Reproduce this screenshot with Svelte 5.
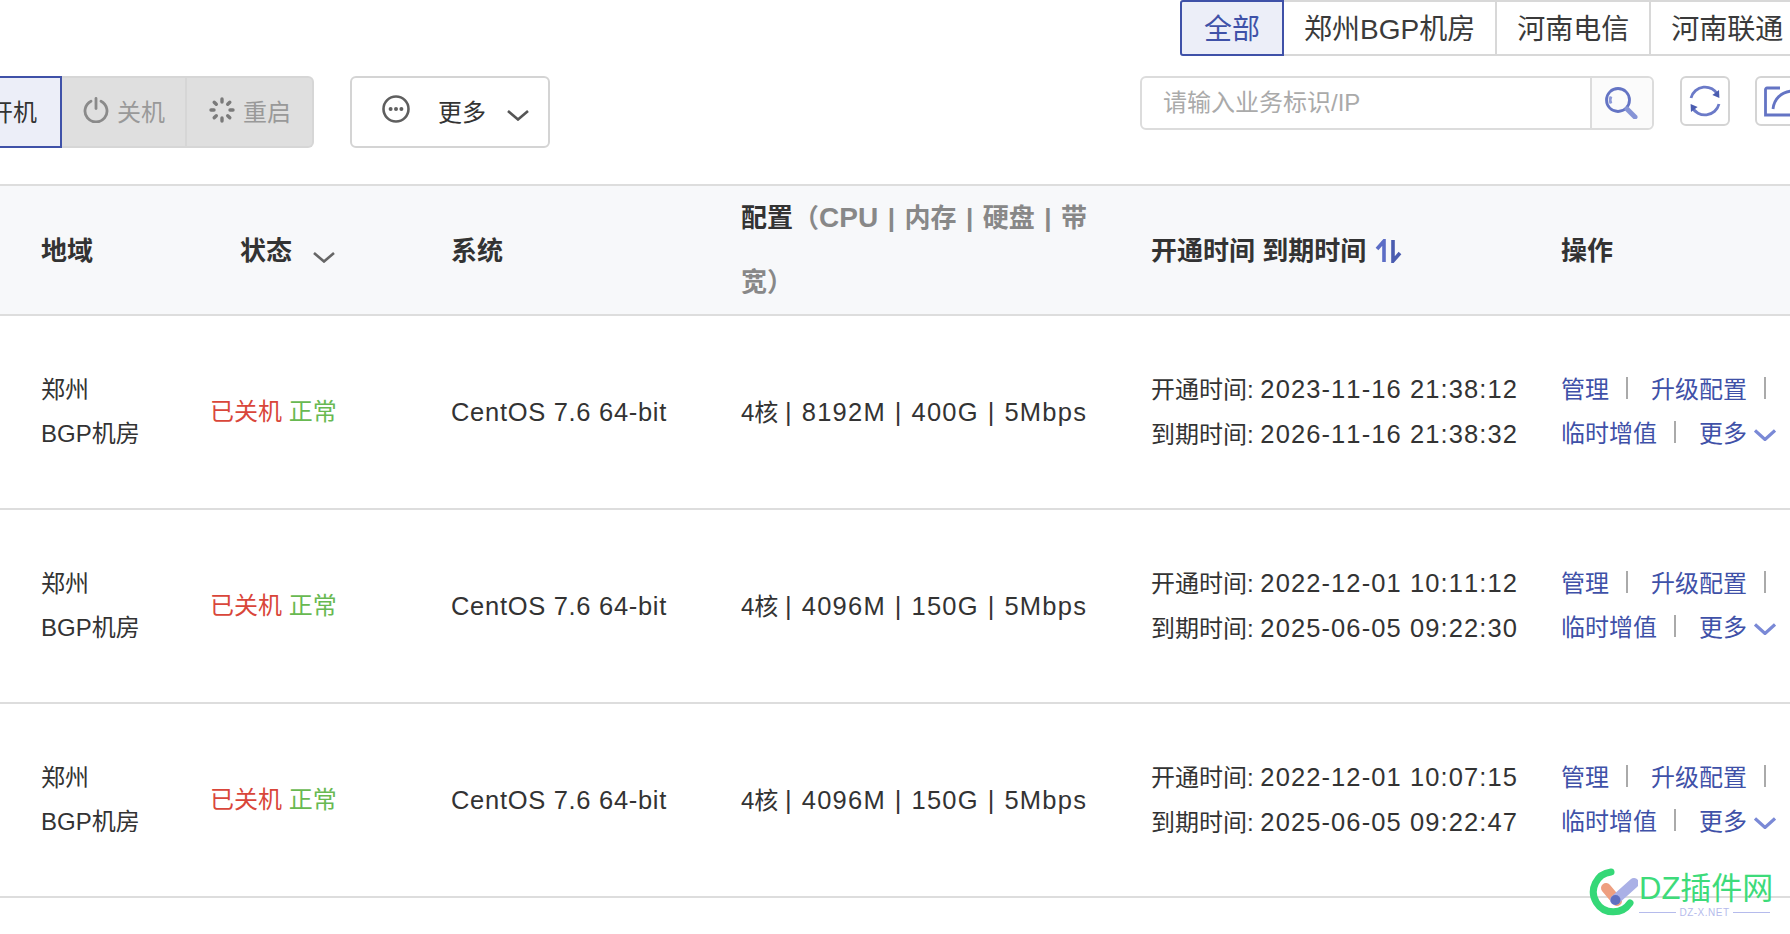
<script>
  const tabs = ["全部", "郑州BGP机房", "河南电信", "河南联通"];
  const rows = [
    { disk: "400G", mem: "8192M", open: "2023-11-16 21:38:12", end: "2026-11-16 21:38:32" },
    { disk: "150G", mem: "4096M", open: "2022-12-01 10:11:12", end: "2025-06-05 09:22:30" },
    { disk: "150G", mem: "4096M", open: "2022-12-01 10:07:15", end: "2025-06-05 09:22:47" }
  ];
</script>

<div class="page">
  <div class="tabs">
    {#each tabs as t, i}
      <div class="tab" class:on={i === 0}>{t}</div>
    {/each}
  </div>

  <div class="toolbar">
    <div class="group">
      <div class="btn start">开机</div>
      <div class="btn off">
        <svg width="26" height="26" viewBox="0 0 26 26" fill="none" stroke="#8a8a8a" stroke-width="2.8" stroke-linecap="round">
          <path d="M8 4.200a11 11 0 1 0 10 0" />
          <path d="M13 1.500v10" />
        </svg>
        关机
      </div>
      <div class="btn off last">
        <svg width="26" height="26" viewBox="0 0 26 26" fill="none" stroke="#7a7a7a" stroke-width="3.400" stroke-linecap="round">
          <path d="M13 2v3M13 21v3M2 13h3M21 13h3M5.200 5.200l2.100 2.100M18.700 18.700l2.100 2.100M5.200 20.800l2.100-2.100M18.700 7.300l2.100-2.100" />
        </svg>
        重启
      </div>
    </div>

    <div class="more">
      <svg class="dots" width="28" height="28" viewBox="0 0 28 28" fill="none">
        <circle cx="14" cy="14" r="12.500" stroke="#5f5f5f" stroke-width="2.600" />
        <circle cx="8.600" cy="14" r="2" fill="#5f5f5f" />
        <circle cx="14" cy="14" r="2" fill="#5f5f5f" />
        <circle cx="19.400" cy="14" r="2" fill="#5f5f5f" />
      </svg>
      <span>更多</span>
      <svg class="chev" width="22" height="11" viewBox="0 0 22 11" fill="none" stroke="#555" stroke-width="2.600">
        <path d="M1 1l10 8.500L21 1" />
      </svg>
    </div>

    <div class="search">
      <div class="ph">请输入业务标识/IP</div>
      <div class="go">
        <svg width="33" height="32" viewBox="0 0 33 32" fill="none" stroke="#6474c4" stroke-width="2.800">
          <circle cx="13" cy="13" r="11.500" />
          <path d="M6 9.500a8 8 0 0 0 0 7" stroke="#8c99d8" />
          <path d="M22 22l8 8" stroke-width="5" stroke-linecap="round" stroke="#8694d6" />
        </svg>
      </div>
    </div>

    <div class="ico">
      <svg width="32" height="32" viewBox="0 0 32 32" fill="none" stroke="#6b7ac8" stroke-width="2.800">
        <path d="M2 13A14.500 14.500 0 0 1 29 10" />
        <path d="M30 19A14.500 14.500 0 0 1 3 22" />
        <path d="M30 5l.4 8-7-3z" fill="#4a5cb0" stroke="none" />
        <path d="M2 27l-.4-8 7 3z" fill="#4a5cb0" stroke="none" />
      </svg>
    </div>
    <div class="ico">
      <svg width="32" height="32" viewBox="0 0 32 32" fill="none" stroke="#6474c4" stroke-width="2.800">
        <path d="M16 3H3a1.500 1.500 0 0 0-1.500 1.500V30H30V20" />
        <path d="M9 24C10 14 17 7 28 6" />
      </svg>
    </div>
  </div>

  <table>
    <colgroup>
      <col class="c1" /><col class="c2" /><col class="c3" /><col class="c4" /><col class="c5" /><col class="c6" />
    </colgroup>
    <thead>
      <tr>
        <th class="first">地域</th>
        <th class="state">
          状态
          <svg width="22" height="11" viewBox="0 0 22 11" fill="none" stroke="#666" stroke-width="2.600">
            <path d="M1 1l10 8.500L21 1" />
          </svg>
        </th>
        <th>系统</th>
        <th class="cfg">配置<span>（<i>CPU</i> | 内存 | 硬盘 | 带<br />宽）</span></th>
        <th>
          开通时间 到期时间
          <svg class="sort" width="27" height="24" viewBox="0 0 27 24" fill="none" stroke-width="3.600">
            <path d="M9 23V2L2 10" stroke="#5c6dc6" />
            <path d="M18 1v21l7-8" stroke="#4a5cb0" />
          </svg>
        </th>
        <th>操作</th>
      </tr>
    </thead>
    <tbody>
      {#each rows as r}
        <tr>
          <td class="first">郑州<br />BGP机房</td>
          <td><span class="red">已关机</span> <span class="green">正常</span></td>
          <td><i class="os">CentOS 7.6 64-bit</i></td>
          <td>4核 <i class="spec">| {r.mem} | {r.disk} | 5Mbps</i></td>
          <td>开通时间: <i class="time">{r.open}</i><br />到期时间: <i class="time">{r.end}</i></td>
          <td class="ops">
            <div><a href="#m">管理</a><b></b><a href="#u">升级配置</a><b></b></div>
            <div>
              <a href="#t">临时增值</a><b></b><a href="#o">更多</a>
              <svg width="22" height="12" viewBox="0 0 22 12" fill="none" stroke="#7a89d6" stroke-width="3.200">
                <path d="M1 1.500l10 9 10-9" />
              </svg>
            </div>
          </td>
        </tr>
      {/each}
    </tbody>
  </table>

  <div class="mark">
    <svg width="50" height="54" viewBox="0 0 50 54" fill="none">
      <path d="M23 6A20 20 0 1 0 42 37" stroke="#35d877" stroke-width="7" stroke-linecap="round" />
      <path d="M18 22l11 13" stroke="#ee9f80" stroke-width="10" stroke-linecap="round" />
      <path d="M27 34l19-17" stroke="#aab0e6" stroke-width="10" stroke-linecap="round" />
      <circle cx="27.500" cy="34" r="5" fill="#5f6fc0" />
    </svg>
    <div class="mark-text">
      <div class="name">DZ插件网</div>
      <div class="site"><span>DZ-X.NET</span></div>
    </div>
  </div>
</div>

<style>
  :global(body) {
    margin: 0;
    background: #fff;
  }

  .page {
    position: relative;
    width: 1790px;
    height: 934px;
    overflow: hidden;
    color: #333;
    font-family: "Liberation Sans", "Noto Sans CJK SC", sans-serif;
    font-size: 24px;
  }

  i {
    font-style: normal;
    font-size: 25.5px;
  }

  .os {
    letter-spacing: 0.7px;
  }

  .spec {
    letter-spacing: 1.25px;
    word-spacing: 0.5px;
  }

  .time {
    font-kerning: none;
    letter-spacing: 1.1px;
  }

  .tabs {
    display: flex;
    height: 56px;
    padding-left: 1180px;
    box-sizing: border-box;
  }

  .tab {
    flex: none;
    display: flex;
    align-items: center;
    padding: 0 20px 2px;
    font-size: 28px;
    color: #3a3a3a;
    border: 2px solid #d8d8d8;
    border-left: 0;
    box-sizing: border-box;
  }

  .tab.on {
    width: 104px;
    justify-content: center;
    padding: 0 0 2px;
    color: #3f51a8;
    background: #eceef8;
    border: 2px solid #3f51a8;
    border-radius: 3px 0 0 3px;
  }

  .toolbar {
    display: flex;
    align-items: flex-start;
    margin-top: 20px;
    height: 108px;
    white-space: nowrap;
  }

  .group {
    display: flex;
    flex: none;
    margin-left: -37px;
    height: 72px;
  }

  .btn {
    display: flex;
    align-items: center;
    box-sizing: border-box;
    height: 100%;
    padding-bottom: 4px;
  }

  .btn.start {
    width: 99px;
    padding-left: 24px;
    background: #eceef8;
    border: 2px solid #3f51a8;
  }

  .btn.off {
    width: 125px;
    gap: 8px;
    padding-left: 21px;
    color: #999;
    background: #dfdfdf;
    border: 2px solid #d6d6d6;
    border-left: 0;
  }

  .btn.off.last {
    width: 127px;
    padding-left: 22px;
    border-radius: 0 6px 6px 0;
  }

  .more {
    flex: none;
    display: flex;
    align-items: center;
    box-sizing: border-box;
    width: 200px;
    height: 72px;
    margin-left: 36px;
    padding: 0 0 4px 30px;
    border: 2px solid #d4d4d4;
    border-radius: 6px;
  }

  .more span {
    margin-left: 28px;
  }

  .more .dots {
    margin-top: -3px;
  }

  .more .chev {
    margin: 10px 0 0 21px;
  }

  .search {
    flex: none;
    display: flex;
    box-sizing: border-box;
    width: 514px;
    height: 54px;
    margin-left: 590px;
    border: 2px solid #dcdcdc;
    border-radius: 6px;
  }

  .ph {
    flex: 1;
    padding-left: 21px;
    line-height: 50px;
    color: #aaa;
  }

  .go {
    display: flex;
    align-items: center;
    box-sizing: border-box;
    width: 62px;
    padding-left: 13px;
    background: #fbfbfb;
    border-left: 2px solid #dcdcdc;
    border-radius: 0 5px 5px 0;
  }

  .ico {
    flex: none;
    display: flex;
    align-items: center;
    justify-content: center;
    box-sizing: border-box;
    width: 50px;
    height: 50px;
    margin-left: 26px;
    border: 2px solid #d4d4d4;
    border-radius: 6px;
  }

  .ico + .ico {
    margin-left: 25px;
  }

  table {
    width: 1790px;
    table-layout: fixed;
    border-collapse: collapse;
  }

  .c1 { width: 210px; }
  .c2 { width: 241px; }
  .c3 { width: 290px; }
  .c4 { width: 410px; }
  .c5 { width: 410px; }
  .c6 { width: 229px; }

  th {
    height: 128px;
    padding: 0 0 3px;
    box-sizing: border-box;
    text-align: left;
    font-weight: 700;
    font-size: 26px;
    color: #333;
    background: #f7f8fa;
    border-top: 2px solid #ddd;
    border-bottom: 2px solid #ddd;
  }

  th svg {
    margin-left: 2px;
    vertical-align: -3px;
  }

  th.state {
    padding-left: 30px;
  }

  th.state svg {
    margin-left: 14px;
  }

  th.cfg {
    padding-bottom: 0;
    line-height: 64px;
    white-space: nowrap;
  }

  th.cfg span {
    color: #888;
    word-spacing: 2.3px;
  }

  th.cfg i {
    font-size: 28px;
  }

  th.first {
    padding-left: 41px;
  }

  td {
    height: 192px;
    padding: 0;
    line-height: 44px;
    white-space: nowrap;
    border-bottom: 2px solid #ddd;
  }

  td.first {
    padding-left: 41px;
  }

  .red {
    color: #d9463a;
  }

  .green {
    color: #68b951;
  }

  .ops a {
    color: #3f51a8;
    text-decoration: none;
  }

  .ops b {
    display: inline-block;
    width: 2px;
    height: 22px;
    margin: 0 23px 0 17px;
    vertical-align: -1px;
    background: #aaa;
  }

  .ops svg {
    margin-left: 0;
    vertical-align: 1px;
  }

  .mark {
    position: absolute;
    left: 1588px;
    top: 866px;
    display: flex;
    gap: 1px;
    color: #3ddb7a;
  }

  .mark-text {
    width: 131px;
    margin-top: 5px;
  }

  .name {
    font-size: 31px;
    line-height: 35px;
    white-space: nowrap;
  }

  .site {
    display: flex;
    align-items: center;
    justify-content: center;
    height: 12px;
    font-size: 10px;
    letter-spacing: 0.5px;
    color: #b5bbec;
    background: linear-gradient(#b5bbec, #b5bbec) center / 100% 1px no-repeat;
  }

  .site span {
    padding: 0 3px;
    background: #fff;
  }
</style>
